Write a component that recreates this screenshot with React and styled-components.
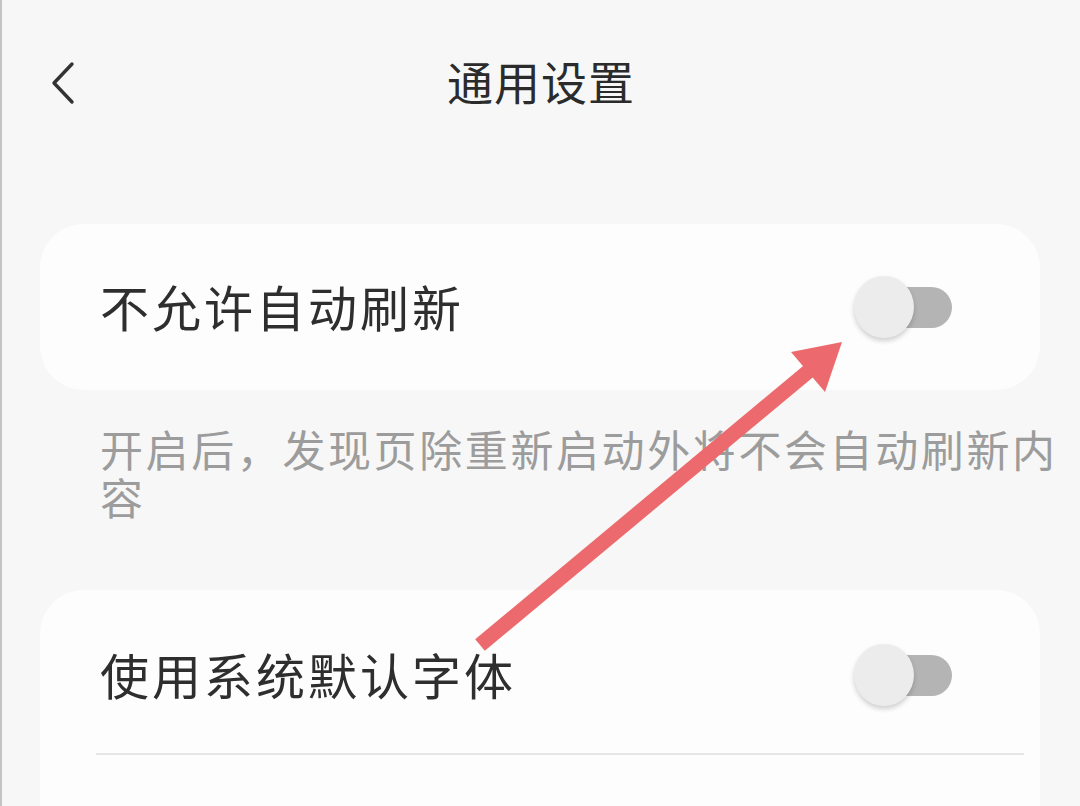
import React from "react";
import styled, { createGlobalStyle } from "styled-components";

const GlobalStyle = createGlobalStyle`
  html, body {
    margin: 0;
    padding: 0;
    background: #f7f7f7;
  }
  body {
    font-family: "Noto Sans CJK SC", "Noto Sans", sans-serif;
  }
`;

const settings = [
    {
        label: "不允许自动刷新",
        hint: "开启后，发现页除重新启动外将不会自动刷新内容",
    },
    {
        label: "使用系统默认字体",
        divider: true,
    },
];

const App = () => {
    return (
        <Page>
            <GlobalStyle />
            <Header>
                <BackButton aria-label="返回">
                    <svg width="30" height="48" viewBox="0 0 30 48">
                        <polyline
                            points="22,6 4,25 22,44"
                            fill="none"
                            stroke="#333"
                            strokeWidth="3.4"
                            strokeLinecap="round"
                            strokeLinejoin="round"
                        />
                    </svg>
                </BackButton>
                <Title>通用设置</Title>
            </Header>

            <Content>
                {settings.map((item) => (
                    <Section key={item.label}>
                        <Card $open={!item.hint}>
                            <Row $first={!!item.hint}>
                                <Label>{item.label}</Label>
                                <Toggle />
                            </Row>
                            {item.divider && <Divider />}
                        </Card>
                        {item.hint && <Hint>{item.hint}</Hint>}
                    </Section>
                ))}
            </Content>

            {/* annotation arrow drawn over the screenshot */}
            <Arrow width="1080" height="806" viewBox="0 0 1080 806">
                <line
                    x1="478"
                    y1="645"
                    x2="808"
                    y2="370"
                    stroke="#ec6a6d"
                    strokeWidth="15"
                />
                <polygon points="840,342 789,352 823,392" fill="#ec6a6d" />
            </Arrow>
        </Page>
    );
};

export default App;


const Toggle = () => (
    <Switch>
        <Track />
        <Knob />
    </Switch>
);


const Page = styled.div`
  position: relative;
  width: 1080px;
  height: 806px;
  overflow: hidden;
  background: #f7f7f7;
  border-left: 2px solid #c4c4c4;
  box-sizing: border-box;
`;

const Header = styled.header`
  height: 164px;
  display: flex;
  align-items: center;
  justify-content: center;
  position: relative;
`;

const BackButton = styled.button`
  position: absolute;
  left: 48px;
  top: 58px;
  border: none;
  background: none;
  padding: 0;
  display: flex;
`;

const Title = styled.h1`
  margin: 0;
  margin-top: -4px;
  font-size: 46px;
  font-weight: 400;
  letter-spacing: 1px;
  color: #2b2b2b;
`;

const Content = styled.main`
  padding: 60px 40px 0 38px;
  display: flex;
  flex-direction: column;
  gap: 70px;
`;

const Section = styled.section`
  display: flex;
  flex-direction: column;
`;

const Card = styled.div`
  background: #fdfdfd;
  border-radius: ${({ $open }) => ($open ? "44px 44px 0 0" : "44px")};
  padding-bottom: ${({ $open }) => ($open ? "60px" : "0")};
`;

const Row = styled.div`
  height: ${({ $first }) => ($first ? "166px" : "170px")};
  display: flex;
  align-items: center;
  justify-content: space-between;
  padding: 0 88px 0 60px;
`;

const Label = styled.span`
  font-size: 49px;
  letter-spacing: 3px;
  color: #2e2e2e;
  margin-top: -4px;
`;

const Hint = styled.p`
  margin: 34px -40px 0 60px;
  font-size: 43px;
  line-height: 48px;
  letter-spacing: 2.6px;
  color: #9c9c9c;
`;

const Divider = styled.div`
  height: 2px;
  background: #e6e6e6;
  margin: -7px 16px 0 56px;
`;

const Switch = styled.div`
  position: relative;
  width: 98px;
  height: 62px;
  flex-shrink: 0;
`;

const Track = styled.div`
  position: absolute;
  left: 4px;
  right: 0;
  top: 11px;
  height: 41px;
  border-radius: 21px;
  background: #b4b4b4;
`;

const Knob = styled.div`
  position: absolute;
  left: 0;
  top: 0;
  width: 60px;
  height: 62px;
  border-radius: 50%;
  background: #ececec;
  box-shadow: 0 3px 5px rgba(0, 0, 0, 0.18);
`;

const Arrow = styled.svg`
  position: absolute;
  left: 0;
  top: 0;
  pointer-events: none;
`;
